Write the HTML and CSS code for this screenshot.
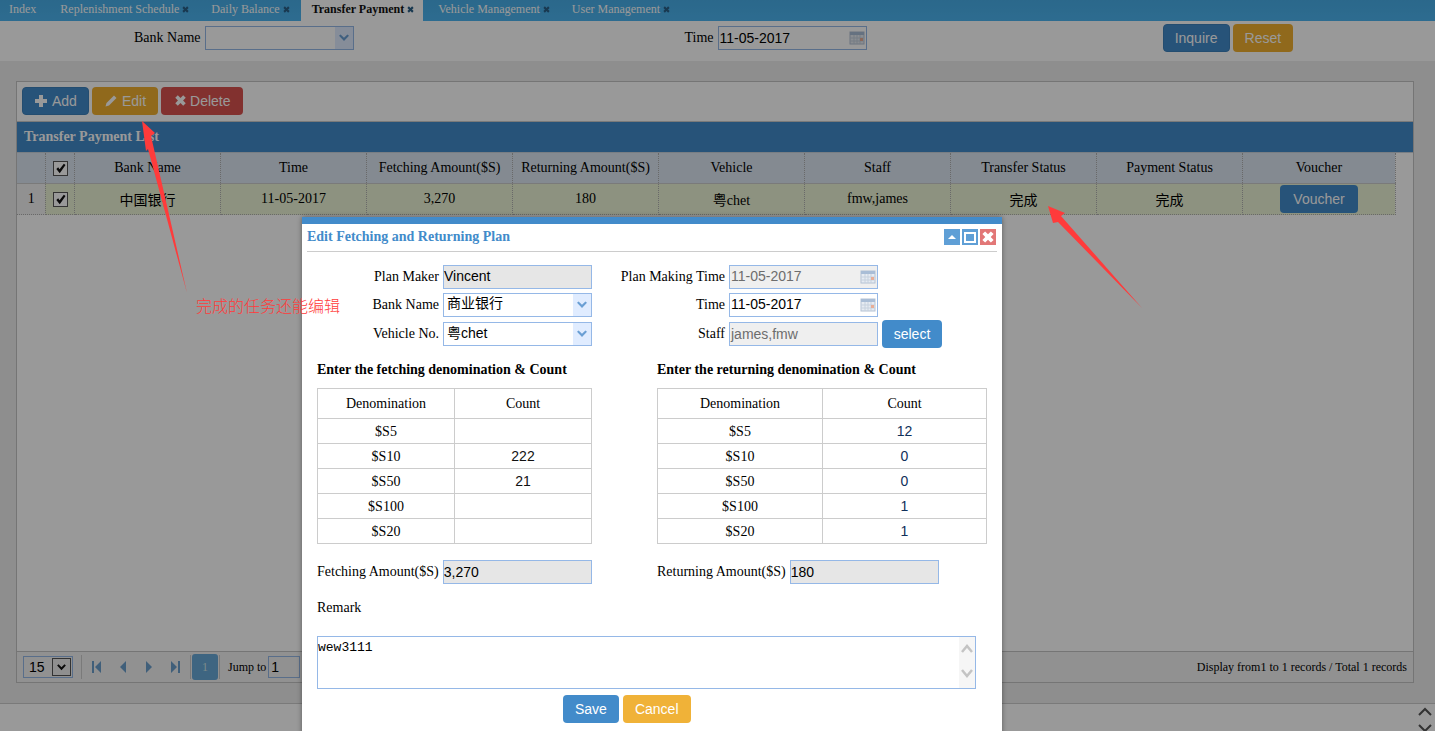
FILE: index.html
```html
<!DOCTYPE html>
<html lang="en">

<head>
    <meta charset="UTF-8">
    <title>Transfer Payment</title>
    <link rel="stylesheet" href="styles.css">
</head>

<body>
    <svg class="defs" width="0" height="0">
        <symbol id="i-close" viewBox="0 0 10 10"><path d="M1.5 3.2 3.2 1.5 5 3.3 6.8 1.5 8.5 3.2 6.7 5 8.5 6.8 6.8 8.5 5 6.7 3.2 8.5 1.5 6.8 3.3 5Z" /></symbol>
        <symbol id="i-plus" viewBox="0 0 14 14"><path d="M5 1h4v4h4v4H9v4H5V9H1V5h4Z" /></symbol>
        <symbol id="i-pencil" viewBox="0 0 14 14"><path d="M10 1.5 12.5 4 5 11.5 1.5 12.5 2.5 9Z" /></symbol>
        <symbol id="i-chev" viewBox="0 0 12 8"><path d="M1 1.8 2.6.4 6 3.8 9.4.4 11 1.8 6 7Z" /></symbol>
        <symbol id="i-cal" viewBox="0 0 16 14"><rect x="1" y="1" width="14" height="12" fill="#e6ebf2" stroke="#b4c2d4" /><rect x="1" y="1" width="14" height="3" fill="#a9bdd6" /><path d="M5 4v9M8 4v9M11 4v9M1 7h14M1 10h14" stroke="#c6d1de" /><rect x="11" y="7" width="3" height="3" fill="#e8ad96" /></symbol>
        <symbol id="i-check" viewBox="0 0 14 14"><path d="M2.5 7.5 4.5 5.6 6 7.8 10.6 1.8 12.4 3.2 6.2 12.2Z" /></symbol>
    </svg>

    <nav class="tabs">
        <a class="tab tab-first">Index</a>
        <a class="tab">Replenishment Schedule<svg class="tab-x"><use href="#i-close" /></svg></a>
        <a class="tab">Daily Balance<svg class="tab-x"><use href="#i-close" /></svg></a>
        <a class="tab active">Transfer Payment<svg class="tab-x"><use href="#i-close" /></svg></a>
        <a class="tab">Vehicle Management<svg class="tab-x"><use href="#i-close" /></svg></a>
        <a class="tab">User Management<svg class="tab-x"><use href="#i-close" /></svg></a>
    </nav>

    <section class="search">
        <span class="search-label bank-label">Bank Name</span>
        <div class="field combo"><span class="field-text"></span><span class="combo-arrow"><svg><use href="#i-chev" /></svg></span></div>
        <span class="search-label search-time">Time</span>
        <div class="field date"><span class="field-text">11-05-2017</span><svg class="cal"><use href="#i-cal" /></svg></div>
        <button class="btn btn-blue btn-inquire">Inquire</button>
        <button class="btn btn-yellow">Reset</button>
    </section>

    <main class="main">
        <div class="panel">
            <div class="toolbar">
                <button class="btn btn-blue"><svg class="btn-icon"><use href="#i-plus" /></svg>Add</button>
                <button class="btn btn-yellow"><svg class="btn-icon"><use href="#i-pencil" /></svg>Edit</button>
                <button class="btn btn-red"><svg class="btn-icon del"><use href="#i-close" /></svg>Delete</button>
            </div>
            <div class="panel-title">Transfer Payment List</div>
            <div class="grid-wrap">
                <table class="datagrid">
                    <colgroup>
                        <col class="c-num"><col class="c-chk"><col class="c-w"><col class="c-w"><col class="c-w"><col class="c-w"><col class="c-w"><col class="c-w"><col class="c-w"><col class="c-w"><col class="c-last">
                    </colgroup>
                    <thead>
                        <tr>
                            <th></th>
                            <th><span class="check"><svg><use href="#i-check" /></svg></span></th>
                            <th>Bank Name</th>
                            <th>Time</th>
                            <th>Fetching Amount($S)</th>
                            <th>Returning Amount($S)</th>
                            <th>Vehicle</th>
                            <th>Staff</th>
                            <th>Transfer Status</th>
                            <th>Payment Status</th>
                            <th>Voucher</th>
                        </tr>
                    </thead>
                    <tbody>
                        <tr>
                            <td class="num">1</td>
                            <td><span class="check"><svg><use href="#i-check" /></svg></span></td>
                            <td>中国银行</td>
                            <td>11-05-2017</td>
                            <td>3,270</td>
                            <td>180</td>
                            <td>粤chet</td>
                            <td>fmw,james</td>
                            <td>完成</td>
                            <td>完成</td>
                            <td><button class="btn btn-blue btn-voucher">Voucher</button></td>
                        </tr>
                    </tbody>
                </table>
            </div>
            <div class="pager">
                <div class="page-size"><span>15</span><span class="page-size-btn"><svg><use href="#i-chev" /></svg></span></div>
                <span class="page-sep"></span>
                <svg class="page-icon" viewBox="0 0 12 14"><path d="M1 1h2v12H1ZM10 1v12L4 7Z" /></svg>
                <svg class="page-icon" viewBox="0 0 12 14"><path d="M9 1v12L3 7Z" /></svg>
                <svg class="page-icon" viewBox="0 0 12 14"><path d="M3 1v12l6-6Z" /></svg>
                <svg class="page-icon" viewBox="0 0 12 14"><path d="M2 1v12l6-6ZM9 1h2v12H9Z" /></svg>
                <span class="page-sep sep-b"></span>
                <span class="page-num">1</span>
                <span class="page-sep sep-c"></span>
                <span class="jump">Jump to</span>
                <span class="jump-input">1</span>
                <span class="page-info">Display from1 to 1 records / Total 1 records</span>
            </div>
        </div>
    </main>

    <footer class="bottom">
        <svg class="scroll-arrows" viewBox="0 0 14 26"><path d="M1 8 7 2l6 6M1 18l6 6 6-6" /></svg>
    </footer>

    <div class="mask"></div>

    <div class="dialog">
        <header class="dialog-head">
            <h2>Edit Fetching and Returning Plan</h2>
            <div class="win-btns">
                <span class="win-btn win-min"><svg viewBox="0 0 16 16"><path d="M4 10 8 6l4 4Z" /></svg></span>
                <span class="win-btn win-max"></span>
                <span class="win-btn win-close"><svg viewBox="0 0 10 10"><use href="#i-close" /></svg></span>
            </div>
        </header>

        <div class="plan-form">
            <label>Plan Maker</label>
            <div class="field readonly"><span class="field-text tight">Vincent</span></div>
            <label>Plan Making Time</label>
            <div class="field disabled"><span class="field-text">11-05-2017</span><svg class="cal"><use href="#i-cal" /></svg></div>
            <span></span>

            <label>Bank Name</label>
            <div class="field combo"><span class="field-text pad">商业银行</span><span class="combo-arrow"><svg><use href="#i-chev" /></svg></span></div>
            <label>Time</label>
            <div class="field"><span class="field-text">11-05-2017</span><svg class="cal"><use href="#i-cal" /></svg></div>
            <span></span>

            <label>Vehicle No.</label>
            <div class="field combo"><span class="field-text pad">粤chet</span><span class="combo-arrow"><svg><use href="#i-chev" /></svg></span></div>
            <label>Staff</label>
            <div class="field disabled"><span class="field-text">james,fmw</span></div>
            <button class="btn btn-blue2 btn-select">select</button>
        </div>

        <div class="plan-cols">
            <div class="plan-col">
                <h3>Enter the fetching denomination &amp; Count</h3>
                <table class="denom">
                    <tr><th>Denomination</th><th>Count</th></tr>
                    <tr><td>$S5</td><td class="val"></td></tr>
                    <tr><td>$S10</td><td class="val">222</td></tr>
                    <tr><td>$S50</td><td class="val">21</td></tr>
                    <tr><td>$S100</td><td class="val"></td></tr>
                    <tr><td>$S20</td><td class="val"></td></tr>
                </table>
                <div class="amount">
                    <label>Fetching Amount($S)</label>
                    <div class="field readonly"><span class="field-text tight">3,270</span></div>
                </div>
            </div>
            <div class="plan-col">
                <h3>Enter the returning denomination &amp; Count</h3>
                <table class="denom denom-r">
                    <tr><th>Denomination</th><th>Count</th></tr>
                    <tr><td>$S5</td><td class="val">12</td></tr>
                    <tr><td>$S10</td><td class="val">0</td></tr>
                    <tr><td>$S50</td><td class="val">0</td></tr>
                    <tr><td>$S100</td><td class="val">1</td></tr>
                    <tr><td>$S20</td><td class="val">1</td></tr>
                </table>
                <div class="amount">
                    <label>Returning Amount($S)</label>
                    <div class="field readonly"><span class="field-text tight">180</span></div>
                </div>
            </div>
        </div>

        <p class="remark-label">Remark</p>
        <div class="remark">
            <span class="remark-text">wew3111</span>
            <span class="remark-scroll"><svg viewBox="0 0 14 40"><path d="M2 11 7 5l5 6M2 29l5 6 5-6" /></svg></span>
        </div>
        <div class="dialog-btns">
            <button class="btn btn-blue2">Save</button>
            <button class="btn btn-yellow2">Cancel</button>
        </div>
    </div>

    <!-- red marks drawn on top of the screenshot -->
    <svg class="marks" viewBox="0 0 1435 731">
        <polygon points="142,121 155,133 151,136 187,293 148,149 146,151" />
        <polygon points="1048,206 1065,213 1061,216 1142,308 1058,222 1053,223" />
    </svg>
    <div class="note">完成的任务还能编辑</div>
</body>

</html>
```

FILE: styles.css
```css
html,
body {
    margin: 0;
    height: 731px;
    overflow: hidden;
}

body {
    display: flex;
    flex-direction: column;
    position: relative;
    font-family: "Liberation Serif", "Noto Sans CJK SC", serif;
    font-size: 14px;
    color: #000;
    background: #fff;
}

.defs {
    position: absolute;
}

/* tabs */
.tabs {
    display: flex;
    gap: 2px;
    height: 21px;
    background: linear-gradient(#48aee8, #4cb4f0);
    font-size: 12px;
    line-height: 19px;
}

.tab {
    display: flex;
    align-items: center;
    padding: 0 8px 2px 11px;
    color: #fff;
    white-space: nowrap;
}

.tab-first {
    margin-left: -2px;
    padding-right: 11px;
}

.tab.active {
    margin-right: 2px;
    background: #fff;
    color: #111;
    font-weight: bold;
}

.tab-x {
    width: 9px;
    height: 9px;
    margin-left: 2px;
    fill: #2a5f86;
}

/* search bar */
.search {
    display: flex;
    align-items: center;
    box-sizing: border-box;
    height: 40px;
    padding: 0 0 6px 134px;
    background: #fff;
    flex: none;
}

.search-label {
    margin-right: 4px;
}

.bank-label {
    margin-right: 5px;
}

.search-time {
    margin-left: 330px;
}

.btn {
    display: inline-flex;
    align-items: center;
    justify-content: center;
    height: 28px;
    padding: 0 11px;
    border: 1px solid transparent;
    border-radius: 4px;
    font-family: "Liberation Sans", sans-serif;
    font-size: 14px;
    color: #fff;
}

.btn-blue {
    background: #428bca;
    border-color: #3d80bb;
}

.btn-blue2 {
    background: #428bca;
}

.btn-yellow {
    background: #f0b030;
    margin-left: 3px;
}

.btn-yellow2 {
    background: #f0b238;
    margin-left: 4px;
}

.btn-red {
    background: #d9534f;
    margin-left: 3px;
}

.btn-inquire {
    width: 67px;
    padding: 0;
    margin-left: 296px;
}

.btn-icon {
    width: 14px;
    height: 14px;
    margin-right: 4px;
    fill: #fff;
}

.btn-icon.del {
    width: 15px;
    height: 15px;
    margin-right: 2px;
}

/* form fields */
.field {
    display: flex;
    align-items: center;
    box-sizing: border-box;
    width: 149px;
    height: 24px;
    border: 1px solid #95b8e7;
    background: #fff;
    font-family: "Liberation Sans", "Noto Sans CJK SC", sans-serif;
    font-size: 14px;
}

.field-text {
    flex: 1;
    padding: 0 0 1px 1px;
    line-height: 16px;
    white-space: nowrap;
}

.field-text.tight {
    padding-left: 0;
}

.field-text.pad {
    padding: 0 0 3px 3px;
}

.field.readonly {
    background: #e6e6e6;
}

.field.disabled {
    background: #efefef;
    color: #6d6d6d;
}

.combo-arrow {
    display: flex;
    align-items: center;
    justify-content: center;
    width: 18px;
    align-self: stretch;
    background: #e0ecff;
}

.combo-arrow svg {
    width: 12px;
    height: 8px;
    fill: #6a9fd4;
}

.cal {
    width: 16px;
    height: 14px;
    margin-right: 1px;
}

/* main panel */
.main {
    flex: 1;
    display: flex;
    min-height: 0;
    padding: 20px 21px 20px 16px;
    background: #ededed;
}

.panel {
    flex: 1;
    display: flex;
    flex-direction: column;
    border: 1px solid #c4c4c4;
    background: #fff;
}

.toolbar {
    display: flex;
    align-items: center;
    box-sizing: border-box;
    height: 40px;
    padding: 0 0 2px 5px;
    border-bottom: 1px solid #ccc;
    flex: none;
}

.panel-title {
    height: 30px;
    line-height: 29px;
    padding-left: 7px;
    background: #428bca;
    color: #fff;
    font-weight: bold;
    flex: none;
}

.grid-wrap {
    flex: 1;
    border-top: 1px solid #c8d2dd;
}

.datagrid {
    table-layout: fixed;
    width: 1378px;
    border-collapse: collapse;
}

.c-num {
    width: 28px;
}

.c-chk {
    width: 29px;
}

.c-w {
    width: 146px;
}

.c-last {
    width: 153px;
}

.datagrid th {
    height: 30px;
    padding: 0 0 0 1px;
    font-weight: normal;
    background: #dce7f2;
    border-right: 1px dotted #b0b0b0;
    border-bottom: 1px solid #ccc;
}

.datagrid td {
    height: 29px;
    padding: 0 0 1px 1px;
    text-align: center;
    background: #ebf3d5;
    border-right: 1px dotted #b0b0b0;
    border-bottom: 1px dotted #b0b0b0;
}

.datagrid td.num {
    background: #f2f2f2;
}

.check {
    display: inline-flex;
    box-sizing: border-box;
    width: 15px;
    height: 15px;
    vertical-align: middle;
    border: 1px solid #555;
    background: #fff;
}

.check svg {
    width: 13px;
    height: 13px;
    fill: #111;
}

.btn-voucher {
    width: 78px;
    padding: 0;
    border: 0;
    height: 28px;
    vertical-align: middle;
}

/* pager */
.pager {
    display: flex;
    align-items: center;
    height: 30px;
    padding-left: 6px;
    border-top: 1px solid #c4c4c4;
    background: #f2f2f2;
    font-size: 12px;
    flex: none;
}

.page-size {
    display: flex;
    align-items: center;
    justify-content: space-between;
    box-sizing: border-box;
    width: 50px;
    height: 22px;
    padding: 0 1px 0 5px;
    border: 1px solid #95b8e7;
    font-family: "Liberation Sans", sans-serif;
    font-size: 14px;
}

.page-size-btn {
    display: flex;
    align-items: center;
    justify-content: center;
    box-sizing: border-box;
    width: 19px;
    height: 18px;
    border: 1px solid #555;
    background: #eee;
}

.page-size-btn svg {
    width: 11px;
    height: 7px;
    fill: #111;
}

.page-sep {
    width: 1px;
    height: 24px;
    margin: 0 2px 0 8px;
    background: #ccc;
}

.page-icon {
    width: 12px;
    height: 14px;
    margin: 0 7px;
    fill: #6c9fcc;
}

.sep-b {
    margin: 0 1px 0 2px;
}

.sep-c {
    margin: 0 8px 0 1px;
}

.page-num {
    width: 26px;
    height: 26px;
    line-height: 26px;
    text-align: center;
    border-radius: 3px;
    background: #68a8d8;
    color: #cfe6e6;
}

.jump {
    margin-right: 2px;
}

.jump-input {
    box-sizing: border-box;
    width: 32px;
    height: 22px;
    line-height: 20px;
    padding-left: 2px;
    border: 1px solid #95b8e7;
    font-family: "Liberation Sans", sans-serif;
    font-size: 14px;
}

.page-info {
    margin-left: auto;
    padding-right: 6px;
}

/* bottom bar */
.bottom {
    display: flex;
    justify-content: flex-end;
    align-items: flex-start;
    box-sizing: border-box;
    height: 28px;
    padding: 3px 3px 0 0;
    border-top: 1px solid #ccc;
    background: #fff;
    flex: none;
}

.scroll-arrows {
    width: 14px;
    height: 26px;
    fill: none;
    stroke: #555;
    stroke-width: 2;
}

/* modal */
.mask {
    position: absolute;
    inset: 0;
    background: rgba(0, 0, 0, 0.4);
}

.dialog {
    position: absolute;
    top: 217px;
    left: 302px;
    box-sizing: border-box;
    width: 700px;
    height: 530px;
    border-top: 7px solid #428bca;
    background: #fff;
    box-shadow: 0 0 5px rgba(0, 0, 0, 0.4);
}

.dialog-head {
    display: flex;
    align-items: center;
    justify-content: space-between;
    height: 26px;
    margin: 0 5px;
    padding-bottom: 1px;
    border-bottom: 1px solid #ccc;
}

.dialog-head h2 {
    margin: 0;
    font-size: 14px;
    color: #428bca;
}

.win-btns {
    display: flex;
    gap: 2px;
    margin-right: 1px;
}

.win-btn {
    display: block;
    box-sizing: border-box;
    width: 16px;
    height: 16px;
}

.win-btn svg {
    display: block;
    width: 100%;
    height: 100%;
    fill: #fff;
}

.win-min {
    background: #5f9fd6;
}

.win-max {
    border: 2px solid #5f9fd6;
    border-top-width: 3px;
    background: #5f9fd6;
    box-shadow: inset 0 0 0 2px #fff;
}

.win-close {
    background: #e27777;
}

.plan-form {
    display: grid;
    grid-template-columns: 137px 149px 129px 149px 60px;
    grid-template-rows: 25px 25px 28px;
    gap: 3px 4px;
    align-items: center;
    margin-top: 12px;
}

.plan-form label {
    text-align: right;
}

.btn-select {
    padding: 0;
    border: 0;
    width: 60px;
}

.plan-cols {
    display: grid;
    grid-template-columns: 275px 330px;
    column-gap: 65px;
    margin-left: 15px;
    margin-top: 14px;
}

.plan-col h3 {
    margin: 0 0 10px;
    font-size: 14px;
    line-height: 16px;
}

.denom {
    width: 100%;
    table-layout: fixed;
    border-collapse: collapse;
    border: 1px solid #ccc;
}

.denom th,
.denom td {
    height: 24px;
    padding: 0;
    border: 1px solid #ccc;
    text-align: center;
    font-weight: normal;
}

.denom th {
    height: 29px;
}

.denom td:first-child {
    height: 23px;
    padding-top: 1px;
}

.denom th:first-child {
    width: 136px;
}

.denom-r th:first-child {
    width: 164px;
}

.denom .val {
    font-family: "Liberation Sans", sans-serif;
    color: #111;
}

.denom-r .val {
    color: #10305a;
}

.amount {
    display: flex;
    align-items: center;
    gap: 4px;
    margin-top: 16px;
}

.remark-label {
    margin: 16px 0 0 15px;
    line-height: 16px;
}

.remark {
    display: flex;
    justify-content: space-between;
    box-sizing: border-box;
    width: 659px;
    height: 53px;
    margin: 20px 0 0 15px;
    border: 1px solid #95b8e7;
}

.remark-text {
    padding: 3px 0 0;
    font-family: "Liberation Mono", monospace;
    font-size: 13px;
    line-height: 15px;
}

.remark-scroll {
    width: 16px;
    background: #f6f6f6;
}

.remark-scroll svg {
    display: block;
    width: 14px;
    height: 40px;
    margin: 4px 1px 0;
    fill: none;
    stroke: #c4c4c4;
    stroke-width: 2.5;
}

.dialog-btns {
    display: flex;
    margin-top: 6px;
    padding-left: 261px;
}

/* annotation */
.marks {
    position: absolute;
    inset: 0;
    width: 1435px;
    height: 731px;
    pointer-events: none;
    fill: #ff3b3b;
}

.note {
    position: absolute;
    top: 295px;
    left: 196px;
    font-family: "Noto Sans CJK SC", sans-serif;
    font-size: 16px;
    font-weight: 300;
    line-height: 20px;
    color: #ff3b3b;
    white-space: nowrap;
}
```
